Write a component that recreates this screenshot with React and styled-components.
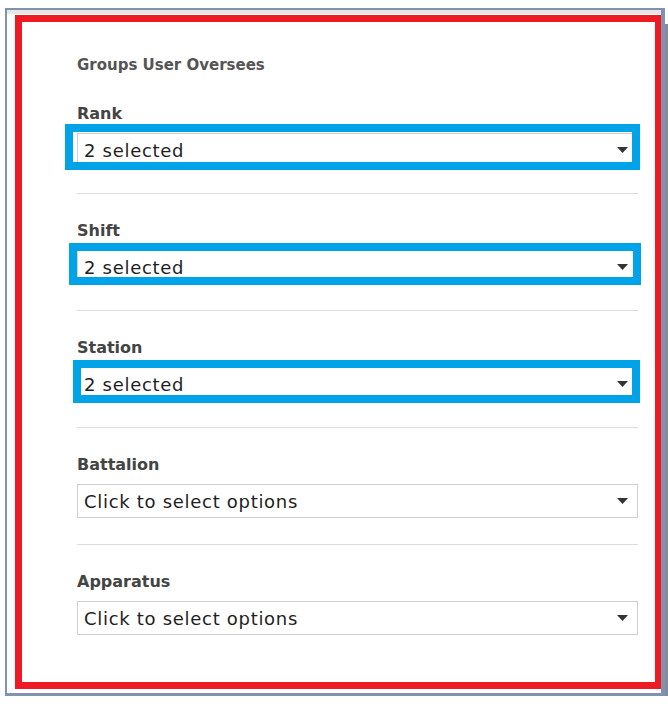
import React from 'react';
import styled, { createGlobalStyle } from 'styled-components';

const GlobalStyle = createGlobalStyle`
  body {
    margin: 0;
    background: #fff;
    font-family: "DejaVu Sans", Verdana, sans-serif;
  }
`;

const Window = styled.div`
  position: relative;
  margin: 8px 0 0 5px;
  width: 660px;
  height: 688px;
  box-sizing: border-box;
  border-style: solid;
  border-color: #7f93b0;
  border-width: 2px 4px 3px 2px;
  background: #fff;
  box-shadow: 13px 16px 0 #838c99;
  display: flex;
  flex-direction: column;
`;

const TopBand = styled.div`
  height: 4px;
  background: #e6e6e2;
`;

const Frame = styled.div`
  flex: 1;
  margin: 1px 0 4px 8px;
  border: 7px solid #ed1c24;
  border-right-width: 6px;
  padding: 34px 17px 0 55px;
`;

const Title = styled.div`
  font-size: 15px;
  line-height: 18px;
  font-weight: bold;
  color: #555;
  margin-bottom: 30px;
`;

const Section = styled.div``;

const Label = styled.div`
  font-size: 16px;
  line-height: 20px;
  font-weight: bold;
  color: #444;
  margin-bottom: 9px;
`;

const Field = styled.div`
  position: relative;
`;

const SelectBox = styled.div`
  height: 34px;
  box-sizing: border-box;
  border: 1px solid #cfcfcf;
  background: #fff;
  display: flex;
  align-items: center;
  justify-content: space-between;
  padding: 0 9px 0 6px;
  font-size: 18px;
  letter-spacing: 0.7px;
  color: #1e1e1e;
`;

const Caret = styled.svg`
  width: 11px;
  height: 6px;
  flex: none;
`;

// paint-style box drawn over a field
const Highlight = styled.div`
  position: absolute;
  top: ${p => -p.$t}px;
  left: ${p => -p.$l}px;
  right: ${p => -p.$r}px;
  bottom: ${p => -p.$b}px;
  border: 8px solid #00a2e8;
  pointer-events: none;
`;

const Divider = styled.div`
  height: 1px;
  background: #dcdcdc;
  margin: 26px 0 27px;
`;

const fields = [
  { label: 'Rank', value: '2 selected', box: { t: 9, l: 12, r: 2, b: 3 } },
  { label: 'Shift', value: '2 selected', box: { t: 7, l: 8, r: 3, b: 1 } },
  { label: 'Station', value: '2 selected', box: { t: 7, l: 4, r: 2, b: 2 } },
  { label: 'Battalion', value: 'Click to select options' },
  { label: 'Apparatus', value: 'Click to select options' },
];

export default function App() {
  return (
    <>
      <GlobalStyle />
      <Window>
        <TopBand />
        <Frame>
          <Title>Groups User Oversees</Title>
          {fields.map((f, i) => (
            <Section key={f.label}>
              <Label>{f.label}</Label>
              <Field>
                <SelectBox>
                  <span>{f.value}</span>
                  <Caret viewBox="0 0 11 6">
                    <polygon points="0,0 11,0 5.5,6" fill="#333" />
                  </Caret>
                </SelectBox>
                {f.box && <Highlight $t={f.box.t} $l={f.box.l} $r={f.box.r} $b={f.box.b} />}
              </Field>
              {i < fields.length - 1 && <Divider />}
            </Section>
          ))}
        </Frame>
      </Window>
    </>
  );
}
